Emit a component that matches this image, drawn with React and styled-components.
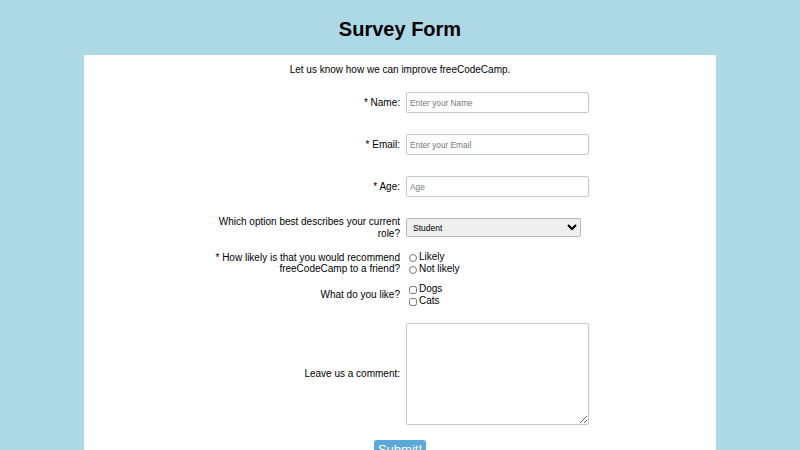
import React from 'react';
import styled, { createGlobalStyle } from 'styled-components';

const GlobalStyle = createGlobalStyle`
  body {
    margin: 0;
    background-color: #add8e6;
    font-family: "Liberation Sans", Arial, sans-serif;
    color: #000;
  }
`;

const Page = styled.div`
  display: flex;
  flex-direction: column;
  align-items: center;
`;

const Title = styled.h1`
  font-size: 20px;
  font-weight: bold;
  margin: 17px 0 14px;
  line-height: 24px;
`;

const Card = styled.div`
  width: 632px;
  background: #fff;
  padding: 9px 0 20px;
`;

const Intro = styled.p`
  font-size: 10px;
  text-align: center;
  margin: 0 0 16px;
  line-height: 12px;
`;

const Row = styled.div`
  display: grid;
  grid-template-columns: 316px 1fr;
  column-gap: 6px;
  align-items: center;
  margin-bottom: ${(p) => p.gap || 0}px;
`;

const Label = styled.label`
  justify-self: end;
  max-width: 190px;
  text-align: right;
  font-size: 10px;
  line-height: 11.5px;
`;

const TextInput = styled.input`
  box-sizing: border-box;
  width: 183px;
  height: 21px;
  border: 1px solid #c8c8c8;
  border-radius: 2px;
  padding: 0 3px;
  font-family: "Liberation Sans", Arial, sans-serif;
  font-size: 8.3px;
  &::placeholder {
    color: #777;
  }
`;

const Select = styled.select`
  box-sizing: border-box;
  width: 175px;
  height: 19px;
  border: 1px solid #b8b8b8;
  border-radius: 2px;
  background: #efefef;
  font-family: "Liberation Sans", Arial, sans-serif;
  font-size: 8.5px;
  padding: 0 0 0 2px;
`;

const Options = styled.div`
  display: flex;
  flex-direction: column;
`;

const Option = styled.label`
  display: flex;
  align-items: center;
  font-size: 10px;
  line-height: 12px;
`;

const Radio = styled.input`
  width: 8px;
  height: 8px;
  margin: 2px 2px 0 3px;
`;

const Check = styled.input`
  width: 8px;
  height: 8px;
  margin: 2px 2px 0 3px;
`;

const Comment = styled.textarea`
  box-sizing: border-box;
  width: 183px;
  height: 102px;
  border: 1px solid #c8c8c8;
  border-radius: 2px;
  resize: both;
`;

const SubmitWrap = styled.div`
  display: flex;
  justify-content: center;
`;

const Submit = styled.button`
  background: #59a9dc;
  color: #fff;
  border: none;
  border-radius: 3px;
  font-family: "Liberation Sans", Arial, sans-serif;
  font-size: 13px;
  padding: 2px 4px;
  line-height: 16px;
`;

export default function App() {
  return (
    <Page>
      <GlobalStyle />
      <Title>Survey Form</Title>
      <Card>
        <Intro>Let us know how we can improve freeCodeCamp.</Intro>
        <form>
          <Row gap={21}>
            <Label htmlFor="name">* Name:</Label>
            <TextInput id="name" placeholder="Enter your Name" />
          </Row>
          <Row gap={21}>
            <Label htmlFor="email">* Email:</Label>
            <TextInput id="email" placeholder="Enter your Email" />
          </Row>
          <Row gap={19}>
            <Label htmlFor="age">* Age:</Label>
            <TextInput id="age" placeholder="Age" />
          </Row>
          <Row gap={12}>
            <Label htmlFor="role">Which option best describes your current role?</Label>
            <Select id="role" defaultValue="student">
              <option value="student">Student</option>
              <option value="full">Full Time Job</option>
              <option value="learner">Full Time Learner</option>
              <option value="none">Prefer not to say</option>
              <option value="other">Other</option>
            </Select>
          </Row>
          <Row gap={8}>
            <Label>* How likely is that you would recommend freeCodeCamp to a friend?</Label>
            <Options>
              <Option><Radio type="radio" name="rec" />Likely</Option>
              <Option><Radio type="radio" name="rec" />Not likely</Option>
            </Options>
          </Row>
          <Row gap={16}>
            <Label>What do you like?</Label>
            <Options>
              <Option><Check type="checkbox" />Dogs</Option>
              <Option><Check type="checkbox" />Cats</Option>
            </Options>
          </Row>
          <Row gap={15}>
            <Label htmlFor="comment">Leave us a comment:</Label>
            <Comment id="comment" />
          </Row>
          <SubmitWrap>
            <Submit type="submit">Submit!</Submit>
          </SubmitWrap>
        </form>
      </Card>
    </Page>
  );
}
